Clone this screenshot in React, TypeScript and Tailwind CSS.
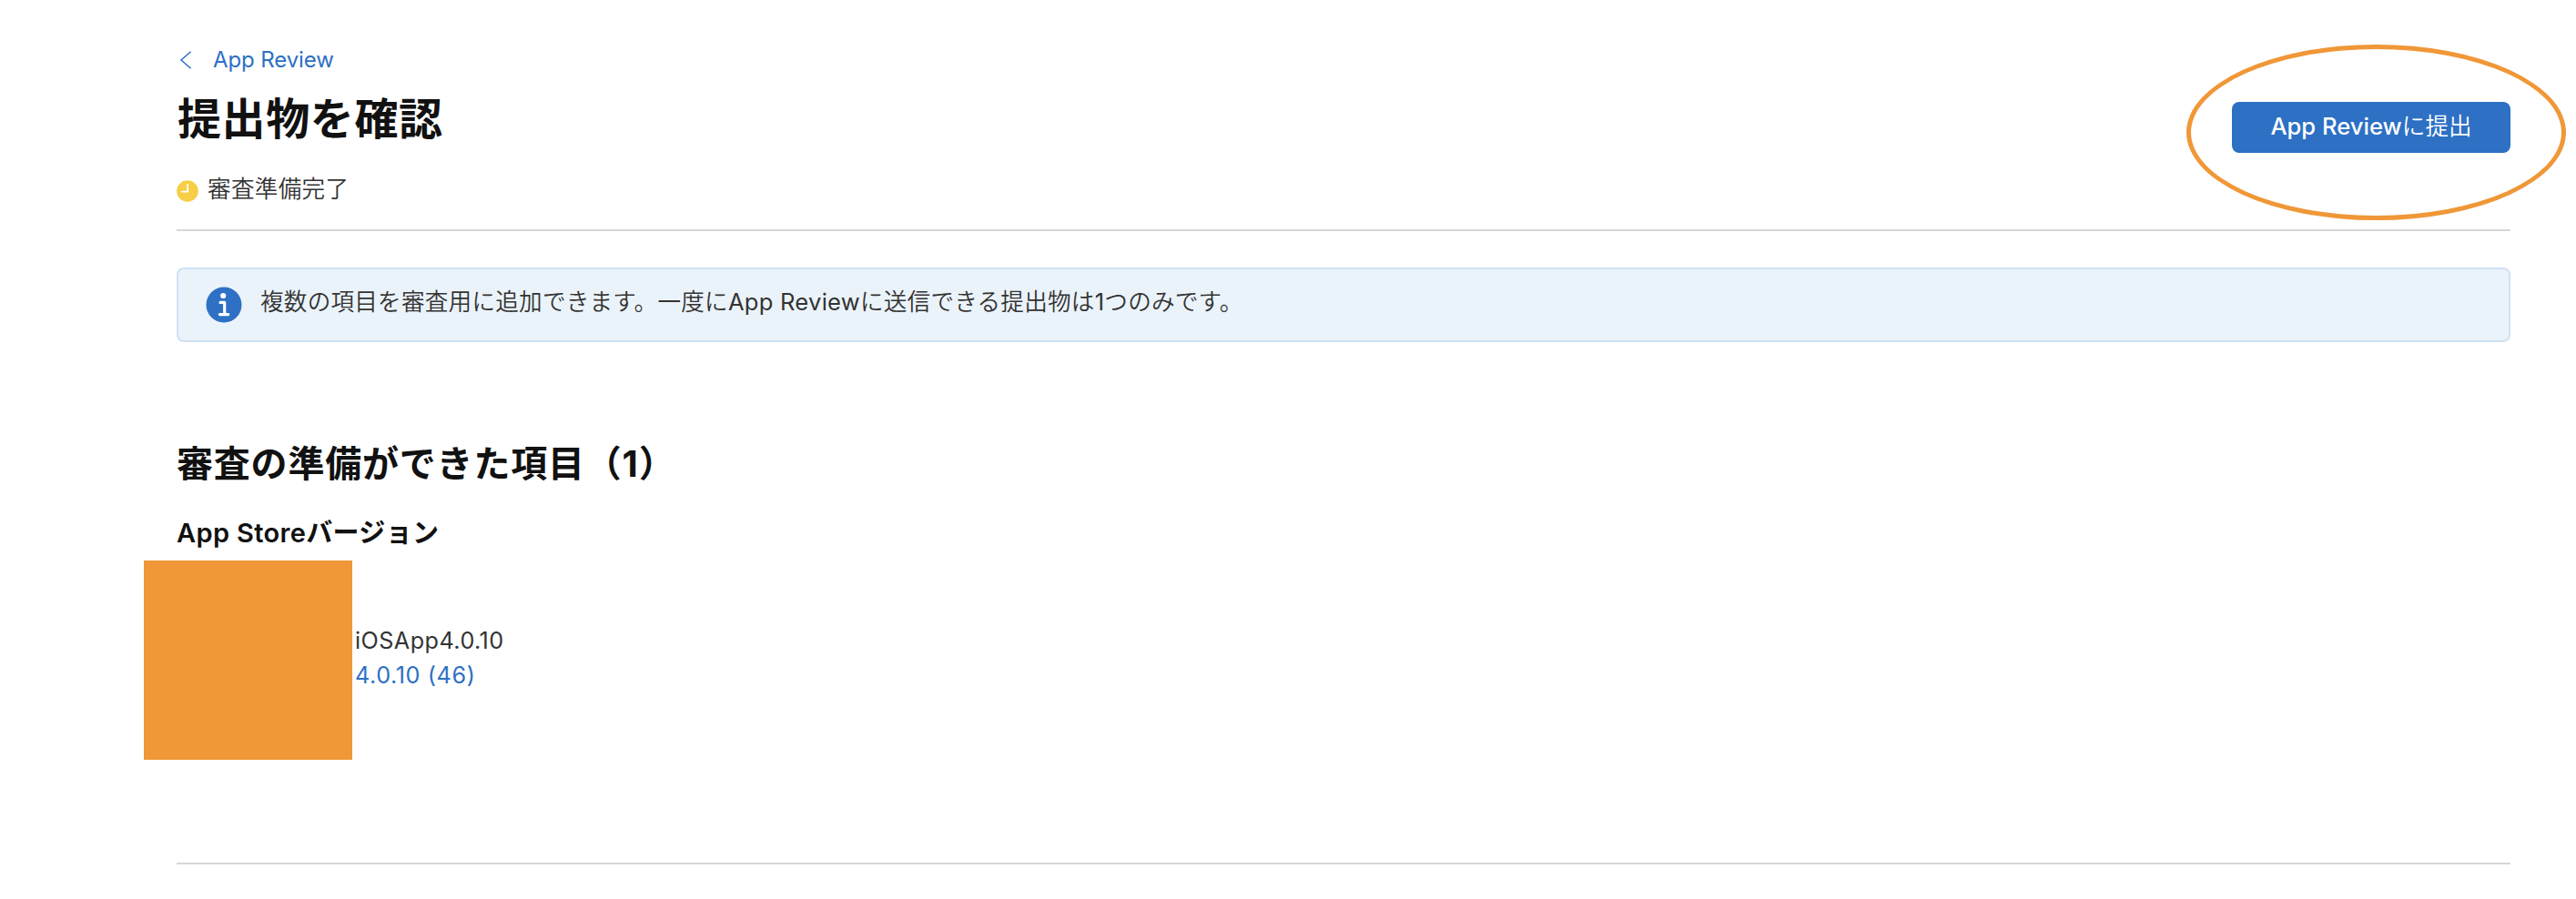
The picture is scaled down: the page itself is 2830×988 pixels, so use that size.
import type { ReactNode } from "react";

// ─────────────────────────────────────────────────────────────────────────────
// App Review — submission confirmation page
// ─────────────────────────────────────────────────────────────────────────────

interface ReviewItem {
  label: string;
  build: string;
}

const items: ReviewItem[] = [{ label: "iOSApp4.0.10", build: "4.0.10 (46)" }];

function ChevronIcon() {
  return (
    <svg width="14" height="20" viewBox="0 0 14 20" fill="none" className="shrink-0">
      <path d="M12.6 .8 2 10l10.6 9.2" stroke="#2d70c4" strokeWidth="1.5" />
    </svg>
  );
}

function ClockIcon() {
  return (
    <svg width="24" height="24" viewBox="0 0 24 24" className="shrink-0">
      <circle cx="12" cy="12" r="11.8" fill="#f7ce46" />
      <path d="M12.2 5v7.6H5.6" fill="none" stroke="#fff" strokeWidth="1.8" strokeLinecap="round" />
    </svg>
  );
}

function InfoIcon() {
  return (
    <svg width="40" height="40" viewBox="0 0 40 40" className="shrink-0">
      <circle cx="20" cy="20" r="19.5" fill="#2d70c4" />
      <circle cx="19.2" cy="10" r="3.1" fill="#fff" />
      <path
        d="M16 17.4h4.7v12.8M15.4 30.6h9.4"
        fill="none"
        stroke="#fff"
        strokeWidth="3.2"
        strokeLinecap="round"
        strokeLinejoin="round"
      />
    </svg>
  );
}

function Alert({ children }: { children: ReactNode }) {
  return (
    <div className="mt-10 flex h-[82px] items-center rounded-lg border-2 border-[#cfe1f2] bg-[#ebf3fa] pl-[30px]">
      <InfoIcon />
      <p className="-mt-[5px] ml-5 text-[25.6px] font-[350] tracking-[0.23px] text-[#333]">{children}</p>
    </div>
  );
}

export default function App() {
  return (
    <div
      lang="ja"
      className="h-[988px] w-[2830px] overflow-hidden bg-white pt-[46px] pr-[72px] pl-[194px] font-['Inter','Noto_Sans_CJK_JP',sans-serif] whitespace-nowrap"
    >
      {/* ── Header ─────────────────────────────────────────────────── */}
      <header className="flex h-[208px] justify-between border-b-2 border-[#d6d6d6]">
        <div>
          <a className="flex h-10 items-center gap-[23px] pl-[3px] text-2xl tracking-[-0.1px] text-[#2d70c4]">
            <ChevronIcon />
            App Review
          </a>
          <h1 className="mt-[9px] h-[72px] pl-px text-[48px] leading-[72px] font-bold tracking-[0.6px] text-[#111]">
            提出物を確認
          </h1>
          <p className="mt-[21px] flex h-10 items-center gap-[10px] text-[25.6px] font-[350] tracking-[0.3px] text-[#333]">
            <span className="mt-1">
              <ClockIcon />
            </span>
            審査準備完了
          </p>
        </div>

        <div className="relative mt-[66px] h-14 w-[306px]">
          <button className="h-14 w-full rounded-lg bg-[#2d70c4] pb-0.5 text-[25.6px] text-white">
            <span className="font-medium">App Review</span>
            <span className="font-[350]">に提出</span>
          </button>
          <div className="pointer-events-none absolute -top-[63px] -left-[50px] h-[193px] w-[417px] rounded-[50%] border-[5px] border-[#f09737]" />
        </div>
      </header>

      <Alert>
        複数の項目を審査用に追加できます。一度に<span className="font-normal">App Review</span>
        に送信できる提出物は<span className="font-normal">1</span>つのみです。
      </Alert>

      {/* ── Items ready for review ─────────────────────────────────── */}
      <section className="mt-[104px] h-[470px] border-b-2 border-[#d6d6d6]">
        <h2 className="h-[60px] text-[40px] leading-[60px] font-bold tracking-[0.8px] text-[#111]">
          審査の準備ができた項目（1）
        </h2>
        <h3 className="mt-[26px] h-10 text-[29px] leading-10 font-semibold tracking-[0.35px] text-[#111]">
          App Storeバージョン
        </h3>

        {items.map((item) => (
          <div key={item.label} className="mt-[10px] -ml-9 flex h-[219px] items-center gap-[3px]">
            <div className="h-full w-[229px] bg-[#f09737]" />
            <div className="-mt-[5px] text-[25.2px] leading-[38px] tracking-[0.45px] text-[#333]">
              <p>{item.label}</p>
              <a className="tracking-[0.6px] text-[#2d70c4]">{item.build}</a>
            </div>
          </div>
        ))}
      </section>
    </div>
  );
}
